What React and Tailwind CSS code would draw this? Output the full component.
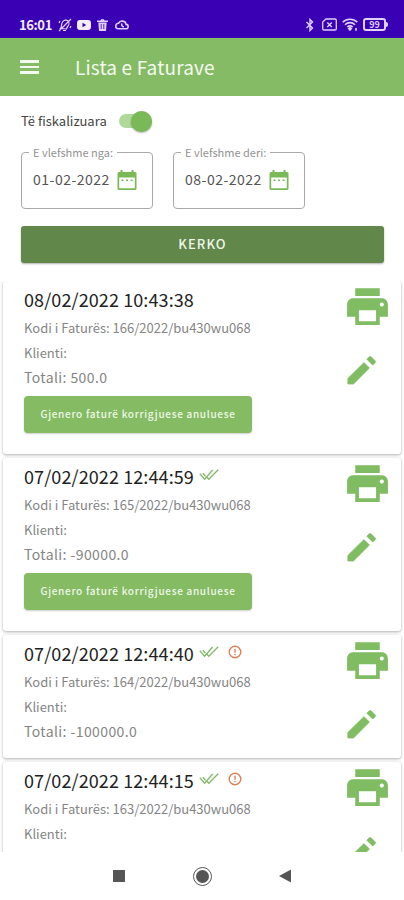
const invoices = [
  { date: '08/02/2022 10:43:38', code: '166/2022/bu430wu068', total: '500.0', button: true },
  { date: '07/02/2022 12:44:59', code: '165/2022/bu430wu068', total: '-90000.0', checked: true, button: true },
  { date: '07/02/2022 12:44:40', code: '164/2022/bu430wu068', total: '-100000.0', checked: true, warning: true },
  { date: '07/02/2022 12:44:15', code: '163/2022/bu430wu068', checked: true, warning: true },
];

function PrintIcon() {
  return (
    <svg viewBox="0 0 24 24" className="h-[49px] w-[49px]" fill="#7fbc62">
      <path d="M19 8H5c-1.66 0-3 1.34-3 3v6h4v4h12v-4h4v-6c0-1.66-1.34-3-3-3zm-2.800 11.200H7.800v-5.400h8.400v5.400zM19 12c-.55 0-1-.45-1-1s.45-1 1-1 1 .45 1 1-.45 1-1 1zm-1-9H6v3.800h12V3z" />
    </svg>
  );
}

function EditIcon() {
  return (
    <svg viewBox="0 0 24 24" className="h-[37px] w-[37px]" fill="#7fbc62" stroke="#7fbc62" strokeWidth=".6" strokeLinejoin="round">
      <path d="M3.200 17.150V20.700h3.600L17.100 10.400l-3.500-3.500zM20.71 7.04a1 1 0 0 0 0-1.41l-2.34-2.34a1 1 0 0 0-1.41 0l-1.43 1.43 3.75 3.75z" />
    </svg>
  );
}

function DoubleCheck() {
  return (
    <svg viewBox="0 0 20 12" className="h-3 w-5" fill="none" stroke="#82b868" strokeWidth="1.3">
      <path d="M.8 4.8l4.8 5.4L13.6 1M3.8 4.3l2.7 3M8 8.200l1.800 2L19.200.8" />
    </svg>
  );
}

function Warning() {
  return (
    <svg viewBox="0 0 14 14" className="h-3.5 w-3.5" fill="none" stroke="#dc8058" strokeWidth="1.4">
      <circle cx="7" cy="7" r="5.800" />
      <path d="M7 3.700v4M7 8.900v1.400" />
    </svg>
  );
}

function StatusBar() {
  return (
    <div className="flex h-[38px] items-end justify-between bg-[#3a00b3] pb-[5px] pl-[19px] pr-[16px] text-[#e0d0fa]">
      <div className="flex h-[17px] items-center">
        <span className="w-[39px] text-[13px] font-bold leading-[17px] tracking-[-0.4px] text-[#f4ecff]">16:01</span>
        <svg viewBox="0 0 14 14" className="h-3.5 w-3.5" fill="none" stroke="currentColor" strokeWidth="1.2">
          <path d="M2.500 10.500C4 9 3 6 4.500 4S8.500 1.500 10 3s1 4-.3 5.500-.7 2-1.200 2.500zM1 13L13 1M5 12.500h3M1 5l1-2M12 10l1-2" />
        </svg>
        <svg viewBox="0 0 14 10" className="ml-[5px] h-2.5 w-3.5">
          <rect width="14" height="10" rx="3" fill="#f4ecff" />
          <path d="M5.500 2.800v4.400L9.200 5z" fill="#3a00b3" />
        </svg>
        <svg viewBox="0 0 11 12" className="ml-[6px] h-3 w-[11px]" fill="currentColor">
          <path d="M0 1.500h3.500L4 .3h3l.5 1.200H11V3H0zM1.300 3.500h8.400L9 12H2z" />
          <path d="M4.200 5v5M6.800 5v5" stroke="#3a00b3" strokeWidth=".8" />
        </svg>
        <svg viewBox="0 0 14 11" className="ml-[7px] h-[11px] w-3.5" fill="none" stroke="currentColor" strokeWidth="1.600">
          <path d="M3.500 9.800h7.300a2.200 2.200 0 0 0 .3-4.400A4 4 0 0 0 3.600 4.200a2.800 2.800 0 0 0-.1 5.600zM7 4.500c-.8 2 .2 3.200 2 3.200" />
        </svg>
      </div>
      <div className="flex h-[17px] items-center">
        <svg viewBox="0 0 10 14" className="h-3.5 w-2.5" fill="none" stroke="currentColor" strokeWidth="1.400">
          <path d="M1.500 4l6 6L5 12.500v-11L7.500 4l-6 6" />
        </svg>
        <svg viewBox="0 0 15 13" className="ml-[7px] h-[13px] w-[15px]" fill="none" stroke="currentColor" strokeWidth="1.300">
          <path d="M4 1h9a1.300 1.300 0 0 1 1.300 1.300v8.400A1.300 1.300 0 0 1 13 12H2A1.300 1.300 0 0 1 .7 10.700V4zM5.300 4.500l4.500 4.500M9.800 4.500L5.300 9" />
        </svg>
        <svg viewBox="0 0 16 13" className="ml-[5px] h-[13px] w-4" fill="none" stroke="currentColor" strokeWidth="1.600">
          <path d="M.7 4.200a10.500 10.500 0 0 1 14.600 0M3 6.700a7 7 0 0 1 10 0M5.300 9a3.800 3.800 0 0 1 5.400 0" />
          <path d="M8 9.500l1.300 1L8 12l-1.300-1.500zM14 10v2.800" />
        </svg>
        <div className="ml-[5px] flex h-[13px] w-[23px] items-center justify-center rounded-[3px] border-2 border-current text-[9px] font-bold leading-none">
          99
        </div>
        <div className="h-[5px] w-[2px] rounded-r bg-current" />
      </div>
    </div>
  );
}

function DateField({ label, value }) {
  return (
    <fieldset className="h-[63px] w-[132px] rounded-[4px] border border-[#a9a9a9] pl-[7px]">
      <legend className="h-3 whitespace-nowrap px-[4px] text-[11px] leading-[12px] text-[#929292]">{label}</legend>
      <div className="flex items-center pl-[4px] pt-[9px]">
        <span className="w-[84px] whitespace-nowrap text-[14px] leading-[24px] tracking-[0.5px] text-[#555]">{value}</span>
        <svg viewBox="0 0 20 22" className="mt-px h-[22px] w-5" fill="#79b957">
          <path fillRule="evenodd" d="M3.500 1h2v2h9V1h2v2H18a1.500 1.500 0 0 1 1.500 1.500v15A1.500 1.500 0 0 1 18 21H2A1.500 1.500 0 0 1 .5 19.500v-15A1.500 1.500 0 0 1 2 3h1.500zM2.200 8.500v10.800h15.600V8.500z" />
          <path d="M4.500 10.500h2v1.500h-2zM9 10.500h2v1.500H9zM13.500 10.500h2v1.500h-2z" />
        </svg>
      </div>
    </fieldset>
  );
}

function InvoiceCard({ invoice }) {
  return (
    <article className={`mx-[3px] flex shrink-0 justify-between rounded-[3px] bg-white pl-[21px] pr-[9px] shadow-[0_1px_3px_rgba(0,0,0,0.32)] ${invoice.button ? 'h-[173px]' : 'h-[123px]'}`}>
      <div className="whitespace-nowrap pt-[6px] text-[#858585]">
        <div className="flex h-6 items-center">
          <h2 className="w-[175px] text-[18px] leading-6 tracking-[0.1px] text-[#222]">{invoice.date}</h2>
          {invoice.checked && <div className="-mt-0.5"><DoubleCheck /></div>}
          {invoice.warning && <div className="-mt-0.5 ml-[9px]"><Warning /></div>}
        </div>
        <p className="mt-[5px] h-6 text-[13px] leading-6">Kodi i Faturës: {invoice.code}</p>
        <p className="mt-px h-6 text-[13px] leading-6">Klienti:</p>
        {invoice.total && <p className="h-[26px] text-[14px] leading-[25px] tracking-[0.4px]">Totali: {invoice.total}</p>}
        {invoice.button && (
          <button className="mt-[5px] block h-[37px] w-[228px] rounded-[4px] bg-[#84bb63] pb-[2px] text-[10px] font-medium tracking-[0.7px] text-[#eef8e8] shadow-[0_1px_2px_rgba(0,0,0,0.2)]">
            Gjenero faturë korrigjuese anuluese
          </button>
        )}
      </div>
      <div className="flex w-[49px] flex-col items-start gap-[21px] pt-px">
        <PrintIcon />
        <EditIcon />
      </div>
    </article>
  );
}

export default function App() {
  return (
    <div className="flex h-[900px] w-[404px] flex-col overflow-hidden bg-white font-['Noto_Sans_CJK_SC','Noto_Sans',sans-serif]">
      <StatusBar />
      <header className="flex h-[58px] items-center bg-[#86bb66] pl-5">
        <div className="flex w-[55px] flex-col gap-[3px]">
          <span className="h-[2.500px] w-[19px] bg-[#f3faef]" />
          <span className="h-[2.500px] w-[19px] bg-[#f3faef]" />
          <span className="h-[2.500px] w-[19px] bg-[#f3faef]" />
        </div>
        <h1 className="text-[19px] leading-7 tracking-[0.15px] text-[#f3faef]">Lista e Faturave</h1>
      </header>
      <section className="h-[185px] shrink-0 px-[21px] pt-[13px]">
        <div className="flex h-6 items-center">
          <span className="w-[98px] whitespace-nowrap text-[13px] text-[#444]">Të fiskalizuara</span>
          <div className="flex h-[14px] w-[33px] items-center justify-end rounded-full bg-[#b0d89b]">
            <div className="h-[21px] w-[21px] shrink-0 rounded-full bg-[#79b957] shadow-[0_1px_2px_rgba(0,0,0,0.3)]" />
          </div>
        </div>
        <div className="mt-[13px] flex gap-5">
          <DateField label="E vlefshme nga:" value="01-02-2022" />
          <DateField label="E vlefshme deri:" value="08-02-2022" />
        </div>
        <button className="mt-[17px] block h-[37px] w-[363px] rounded-[3px] bg-[#61874b] pb-[2px] text-[13px] font-medium tracking-[1.1px] text-[#eef6ea] shadow-[0_1px_2px_rgba(0,0,0,0.3)]">
          KERKO
        </button>
      </section>
      <main className="flex h-[571px] shrink-0 flex-col gap-1 overflow-hidden">
        {invoices.map((invoice) => (
          <InvoiceCard key={invoice.code} invoice={invoice} />
        ))}
      </main>
      <nav className="flex h-12 shrink-0 items-center bg-white pl-[113px]">
        <div className="h-3 w-3 bg-[#555]" />
        <div className="ml-[68px] flex h-[19px] w-[19px] items-center justify-center rounded-full border border-[#555]">
          <div className="h-[13px] w-[13px] rounded-full bg-[#555]" />
        </div>
        <svg viewBox="0 0 12 14" className="ml-[67px] h-3.5 w-3" fill="#555">
          <path d="M12 .5v13L0 7z" />
        </svg>
      </nav>
    </div>
  );
}
